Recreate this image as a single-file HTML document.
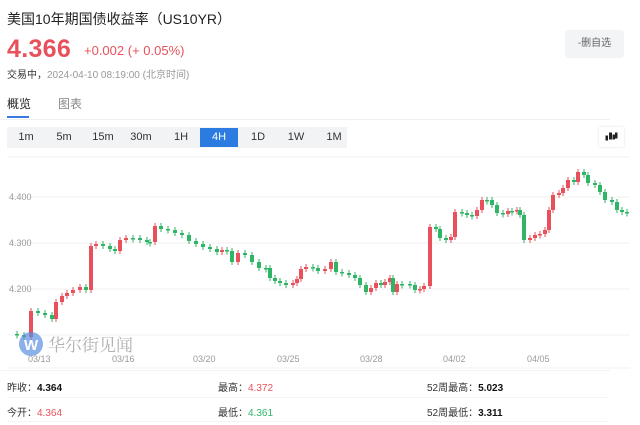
<!DOCTYPE html>
<html><head><meta charset="utf-8"><style>
*{margin:0;padding:0;box-sizing:border-box}
body{width:640px;height:425px;background:#fff;font-family:"Liberation Sans","Noto Sans CJK SC",sans-serif;position:relative;overflow:hidden;color:#222}
.a{position:absolute;white-space:nowrap}
.tab{position:absolute;top:128px;height:19px;width:38px;font-size:11px;text-align:center;line-height:19px;color:#333}
</style></head><body>
<div class="a" style="left:7px;top:9px;font-size:14px;color:#222">美国10年期国债收益率（US10YR）</div>
<div class="a" style="left:7px;top:35px;font-size:25px;font-weight:bold;color:#e8515c;letter-spacing:0.3px">4.366</div>
<div class="a" style="left:84px;top:43px;font-size:13px;color:#e8515c">+0.002 (+ 0.05%)</div>
<div class="a" style="left:7px;top:66px;font-size:10px;color:#333">交易中，<span style="color:#999">2024-04-10 08:19:00 (北京时间)</span></div>
<div class="a" style="left:565px;top:30px;width:59px;height:28px;background:#f3f4f6;border-radius:3px;font-size:10px;color:#666;text-align:center;line-height:28px">-删自选</div>
<div class="a" style="left:7px;top:95px;font-size:12px;color:#222">概览</div>
<div class="a" style="left:58px;top:95px;font-size:12px;color:#888">图表</div>
<div class="a" style="left:7px;top:116px;width:22px;height:2px;background:#3a7ae0"></div>
<div class="a" style="left:0;top:119px;width:610px;height:1px;background:#f0f0f0"></div>
<div class="a" style="left:7px;top:127px;width:340px;height:21px;background:#f2f3f5"></div>
<div class="tab" style="left:7px">1m</div><div class="tab" style="left:45px">5m</div><div class="tab" style="left:84px">15m</div><div class="tab" style="left:122px">30m</div><div class="tab" style="left:162px">1H</div>
<div class="tab" style="left:200px;background:#2c7be0;color:#fff">4H</div>
<div class="tab" style="left:239px">1D</div><div class="tab" style="left:277px">1W</div><div class="tab" style="left:315px">1M</div>
<div class="a" style="left:599px;top:127px;width:25px;height:20px;background:#fff;box-shadow:0 0 2px #ddd"></div>
<svg class="a" style="left:605px;top:131px" width="13" height="12" viewBox="0 0 13 12"><g fill="#222" stroke="#222"><rect x="1" y="5" width="1.5" height="4"/><rect x="4.5" y="2" width="2" height="6"/><rect x="8" y="4" width="1.5" height="4"/><rect x="10.5" y="2" width="1.5" height="5"/></g></svg>
<svg class="a" style="left:0;top:150px" width="640" height="220" viewBox="0 150 640 220">
<g stroke="#f2f2f2" stroke-width="1">
<line x1="8" y1="157" x2="630" y2="157"/><line x1="8" y1="197" x2="630" y2="197"/><line x1="8" y1="243" x2="630" y2="243"/><line x1="8" y1="289" x2="630" y2="289"/><line x1="8" y1="335" x2="630" y2="335"/><line x1="8" y1="368" x2="630" y2="368"/>
</g>
<g font-size="9" fill="#999" font-family="Liberation Sans,sans-serif">
<text x="9" y="200">4.400</text><text x="9" y="246">4.300</text><text x="9" y="292">4.200</text>
<text x="28" y="362">03/13</text><text x="112" y="362">03/16</text><text x="193" y="362">03/20</text><text x="277" y="362">03/25</text><text x="360" y="362">03/28</text><text x="443" y="362">04/02</text><text x="527" y="362">04/05</text>
</g>
<g id="c"></g>
<circle cx="31" cy="344" r="12" fill="#5b8ee0" opacity="0.7"/>
<text x="24" y="350" font-size="15" font-weight="bold" fill="#fff" font-family="Liberation Sans,sans-serif">W</text>
<text x="48" y="351" font-size="17" fill="#b0b0b0" font-family="Noto Serif CJK SC,serif">华尔街见闻</text>
</svg>
<script>
var p=[[10,334],[17,335],[24,337],[31,311],[38,313],[45,315],[52,319],[56,302],[62,296],[67,293],[73,290],[80,287],[86,290],[91,246],[96,244],[103,246],[110,249],[115,251],[120,240],[126,238],[133,238],[140,240],[147,242],[150,242],[155,226],[161,229],[168,230],[175,233],[182,235],[189,241],[196,244],[203,247],[210,249],[217,252],[222,250],[227,251],[232,262],[238,253],[245,255],[252,262],[259,268],[266,268],[270,278],[275,281],[280,283],[286,285],[293,283],[297,279],[301,269],[306,267],[313,268],[318,271],[325,269],[331,262],[336,272],[342,273],[349,275],[355,278],[360,285],[366,292],[371,288],[376,283],[381,285],[385,282],[390,278],[393,292],[397,284],[402,284],[410,285],[415,290],[420,289],[424,286],[430,227],[436,229],[440,238],[446,240],[451,237],[455,212],[462,213],[467,215],[472,216],[477,210],[482,200],[487,200],[492,205],[497,213],[503,214],[508,211],[512,211],[517,210],[520,215],[524,240],[530,238],[535,235],[540,234],[545,230],[549,210],[553,195],[559,193],[563,188],[568,180],[574,182],[578,172],[584,175],[588,183],[595,185],[600,192],[605,200],[612,202],[617,210],[622,212],[627,212]];
var s='';for(var i=1;i<p.length;i++){var o=p[i-1][1],c=p[i][1],x=p[i][0],t=Math.min(o,c),h=Math.max(Math.abs(o-c),1.5),col=c<o?'#e8515c':'#2fb566';
s+='<line x1="'+x+'" x2="'+x+'" y1="'+(t-3)+'" y2="'+(t+h+3)+'" stroke="'+col+'"/><rect x="'+(x-2)+'" y="'+t+'" width="4" height="'+h+'" fill="'+col+'"/>';}
document.getElementById('c').innerHTML=s;
</script>
<div class="a" style="left:0;top:370px;width:610px;height:1px;background:#f3f3f3"></div>
<div class="a" style="left:7px;top:379px;font-size:10px;color:#333">昨收：<b style="color:#111">4.364</b></div>
<div class="a" style="left:218px;top:379px;font-size:10px;color:#333">最高：<span style="color:#e8515c">4.372</span></div>
<div class="a" style="left:427px;top:379px;font-size:10px;color:#333">52周最高：<b style="color:#111">5.023</b></div>
<div class="a" style="left:7px;top:397px;width:600px;height:1px;background:#f3f3f3"></div>
<div class="a" style="left:7px;top:404px;font-size:10px;color:#333">今开：<span style="color:#e8515c">4.364</span></div>
<div class="a" style="left:218px;top:404px;font-size:10px;color:#333">最低：<span style="color:#2fb566">4.361</span></div>
<div class="a" style="left:427px;top:404px;font-size:10px;color:#333">52周最低：<b style="color:#111">3.311</b></div>
<div class="a" style="left:7px;top:421px;width:600px;height:1px;background:#f3f3f3"></div>
</body></html>
